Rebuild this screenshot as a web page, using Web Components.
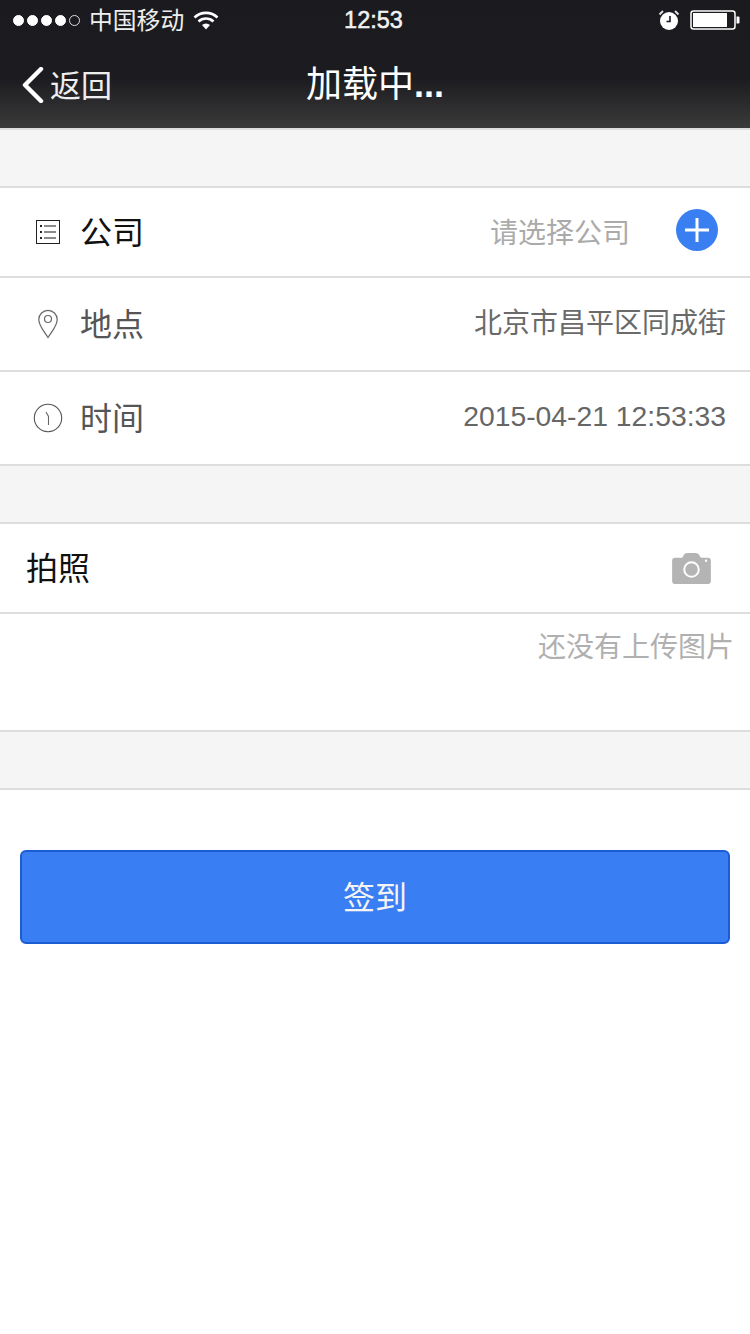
<!DOCTYPE html>
<html>
<head>
<meta charset="utf-8">
<style>
  html, body { margin: 0; padding: 0; background: #fff; }
  body { font-family: "Liberation Sans", "Noto Sans CJK SC", sans-serif; width: 750px; height: 1334px; overflow: hidden; }
</style>
</head>
<body>
<app-header title="加载中"></app-header>
<form-gap height="56"></form-gap>
<form-row height="88" label="公司" color="#111" pad="80">
  <svg slot="icon" width="26" height="26" viewBox="0 0 26 26" style="margin:0 0 2px 34px">
    <rect x="2.500" y="2.500" width="23" height="23" fill="none" stroke="#222" stroke-width="1"/>
    <path d="M6 8h2M6 14h2M6 20h2" stroke="#222" stroke-width="2"/>
    <path d="M10 8h12M10 14h12M10 20h12" stroke="#666" stroke-width="1.400"/>
  </svg>
  <span slot="value" style="color:#aaa;margin-right:46px;padding-bottom:2px">请选择公司</span>
  <svg slot="value" width="42" height="42" viewBox="0 0 42 42" style="margin:0 32px 4px 0">
    <circle cx="21" cy="21" r="21" fill="#3a7ff1"/>
    <path d="M9 21h24M21 9v24" stroke="#fff" stroke-width="3"/>
  </svg>
</form-row>
<form-row height="92" label="地点" color="#555" pad="80">
  <svg slot="icon" width="24" height="32" viewBox="0 0 24 32" style="margin:0 0 0 36px">
    <path d="M12 29.500C8 23 2.800 18 2.800 11.500a9.200 9.200 0 0 1 18.400 0C21.200 18 16 23 12 29.500z" fill="none" stroke="#666" stroke-width="1.200"/>
    <circle cx="12" cy="11" r="3.500" fill="none" stroke="#666" stroke-width="1.200"/>
  </svg>
  <span slot="value" style="color:#6a6a6a;margin-right:24px;padding-bottom:6px">北京市昌平区同成街</span>
</form-row>
<form-row height="92" label="时间" color="#555" pad="80">
  <svg slot="icon" width="30" height="30" viewBox="0 0 30 30" style="margin-left:33px">
    <circle cx="15" cy="15" r="13.700" fill="none" stroke="#555" stroke-width="1.100"/>
    <path d="M13 9l2.500 4.500V22" fill="none" stroke="#666" stroke-width="1.100"/>
  </svg>
  <span slot="value" style="color:#666;margin-right:24px;padding-bottom:4px;font-size:28.300px">2015-04-21 12:53:33</span>
</form-row>
<form-gap height="56"></form-gap>
<form-row height="88" label="拍照" color="#111" pad="26">
  <svg slot="value" width="39" height="31" viewBox="0 0 40 32" style="margin:0 39px 0 0">
    <path d="M3 5h7l1-1c1-3 3-4 5-4h8c2 0 4 1 5 4l1 1h7c2 0 3 1 3 3v21c0 2-1 3-3 3H3c-2 0-3-1-3-3V8c0-2 1-3 3-3z" fill="#b4b4b4"/>
    <circle cx="20" cy="17" r="7.500" fill="#b4b4b4" stroke="#fff" stroke-width="2"/>
    <circle cx="35" cy="8" r="1.300" fill="#fff"/>
  </svg>
</form-row>
<photo-note>还没有上传图片</photo-note>
<form-gap height="56"></form-gap>
<sign-button>签到</sign-button>

<script>
class AppHeader extends HTMLElement {
  constructor() {
    super()
    this.attachShadow({ mode: 'open' })
    this.shadowRoot.innerHTML = `
      <style>
        :host {
          display: block;
          height: 128px;
          color: #fff;
          background: linear-gradient(#1a1a1f 0, #1c1c20 78px, #3a3a3a 128px);
          border-bottom: 2px solid #ddd;
        }
        .status {
          height: 40px;
          display: grid;
          grid-template-columns: 1fr auto 1fr;
          align-items: center;
        }
        .left, .right { display: flex; align-items: center; }
        .left { padding-left: 13px; font-size: 23.800px; color: #eee; }
        .carrier { padding-bottom: 4px; }
        .right { justify-content: flex-end; padding-right: 10px; }
        .dots { display: flex; gap: 3px; margin-right: 9px; }
        .dots i { width: 11px; height: 11px; border-radius: 50%; background: #fff; border: 1px solid #fff; box-sizing: border-box; }
        .dots i:last-child { background: none; border-color: #ddd; }
        .time { font-size: 23.500px; -webkit-text-stroke: 0.5px #f2f2f2; color: #f2f2f2; padding-right: 3px; }
        .bar {
          height: 88px;
          display: flex;
          align-items: center;
          justify-content: center;
          position: relative;
        }
        .back { position: absolute; left: 21px; top: 4px; display: flex; align-items: center; height: 80px; gap: 5px; font-size: 31px; color: #eee; }
        .back span { padding-bottom: 2px; }
        .back svg { margin-top: 2px; }
        h1 { margin: 0; font-size: 36px; font-weight: 400; padding-bottom: 6px; display: flex; align-items: baseline; }
        h1 b { font-size: 36px; font-weight: 700; }
      </style>
      <div class="status">
        <div class="left">
          <div class="dots"><i></i><i></i><i></i><i></i><i></i></div>
          <span class="carrier">中国移动</span>
          <svg width="26" height="19" viewBox="0 0 26 19" style="margin-left:9px">
            <path d="M1.500 6.500a16.500 16.500 0 0 1 23 0" fill="none" stroke="#fff" stroke-width="2.600"/>
            <path d="M5.500 10.500a11 11 0 0 1 15 0" fill="none" stroke="#fff" stroke-width="2.600"/>
            <path d="M9 14a6 6 0 0 1 8 0l-4 4.500z" fill="#fff"/>
          </svg>
        </div>
        <div class="time">12:53</div>
        <div class="right">
          <svg width="22" height="22" viewBox="0 0 22 22" style="margin-right:10px">
            <circle cx="11" cy="12" r="9" fill="#fff"/>
            <path d="M1.500 5.500l3.500-3.500M20.500 5.500l-3.500-3.500" stroke="#ddd" stroke-width="2"/>
            <path d="M12 7v5.500H8.500" fill="none" stroke="#1a1a1f" stroke-width="1.600"/>
          </svg>
          <svg width="50" height="20" viewBox="0 0 50 20">
            <rect x="1" y="1" width="44" height="18" rx="2.500" fill="none" stroke="#fff" stroke-width="1.500"/>
            <rect x="3" y="3" width="34" height="14" fill="#fff"/>
            <path d="M46.500 6.500h2a1 1 0 0 1 1 1v5a1 1 0 0 1-1 1h-2z" fill="#fff"/>
          </svg>
        </div>
      </div>
      <div class="bar">
        <div class="back">
          <svg width="24" height="36" viewBox="0 0 24 36"><path d="M20 2L4 18l16 16" fill="none" stroke="#fff" stroke-width="4.400" stroke-linecap="round" stroke-linejoin="round"/></svg>
          <span>返回</span>
        </div>
        <h1><span></span><b>...</b></h1>
      </div>
    `
    this.shadowRoot.querySelector('h1 span').textContent = this.getAttribute('title')
  }
}

class FormGap extends HTMLElement {
  constructor() {
    super()
    this.attachShadow({ mode: 'open' })
    this.shadowRoot.innerHTML = `
      <style>
        :host { display: block; background: #f5f5f5; border-bottom: 2px solid #ddd; }
      </style>
    `
  }
  connectedCallback() {
    this.style.height = this.getAttribute('height') + 'px'
  }
}

class FormRow extends HTMLElement {
  constructor() {
    super()
    this.attachShadow({ mode: 'open' })
    this.shadowRoot.innerHTML = `
      <style>
        :host {
          display: flex;
          align-items: center;
          background: #fff;
          border-bottom: 2px solid #ddd;
          position: relative;
        }
        .icon { position: absolute; left: 0; top: 0; bottom: 0; display: flex; align-items: center; }
        .value { margin-left: auto; display: flex; align-items: center; font-size: 28px; }
        .label { font-size: 32px; padding-bottom: 4px; }
      </style>
      <div class="icon"><slot name="icon"></slot></div>
      <span class="label"></span>
      <div class="value"><slot name="value"></slot></div>
    `
  }
  connectedCallback() {
    this.style.height = this.getAttribute('height') + 'px'
    this.style.paddingLeft = this.getAttribute('pad') + 'px'
    const label = this.shadowRoot.querySelector('.label')
    label.textContent = this.getAttribute('label')
    label.style.color = this.getAttribute('color')
  }
}

class PhotoNote extends HTMLElement {
  constructor() {
    super()
    this.attachShadow({ mode: 'open' })
    this.shadowRoot.innerHTML = `
      <style>
        :host {
          display: block;
          height: 116px;
          border-bottom: 2px solid #ddd;
          text-align: right;
          padding-right: 16px;
          color: #b0b0b0;
          font-size: 28px;
          line-height: 68px;
        }
      </style>
      <slot></slot>
    `
  }
}

class SignButton extends HTMLElement {
  constructor() {
    super()
    this.attachShadow({ mode: 'open' })
    this.shadowRoot.innerHTML = `
      <style>
        :host { display: block; padding: 60px 20px 0; }
        button {
          display: block;
          width: 100%;
          height: 94px;
          padding: 0 0 4px;
          border: 2px solid #1b5bd4;
          border-radius: 6px;
          background: #3a7ef3;
          color: #f4f4f4;
          font: 32px "Liberation Sans", "Noto Sans CJK SC", sans-serif;
        }
      </style>
      <button><slot></slot></button>
    `
  }
}

customElements.define('app-header', AppHeader)
customElements.define('form-gap', FormGap)
customElements.define('form-row', FormRow)
customElements.define('photo-note', PhotoNote)
customElements.define('sign-button', SignButton)
</script>
</body>
</html>
